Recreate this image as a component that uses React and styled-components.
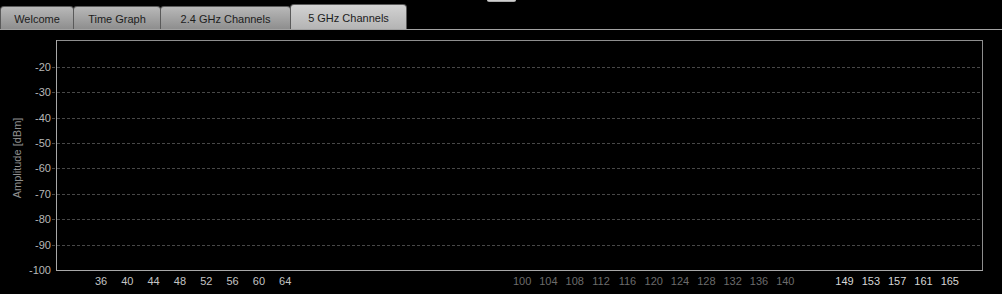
import React from "react";
import styled, { createGlobalStyle } from "styled-components";

const GlobalStyle = createGlobalStyle`
  html, body {
    margin: 0;
    padding: 0;
    background: #000;
  }
  body {
    font-family: "Liberation Sans", Arial, sans-serif;
    overflow: hidden;
  }
`;

const Page = styled.div`
  position: relative;
  width: 1002px;
  height: 294px;
  background: #000;
`;

const Grip = styled.div`
  position: absolute;
  top: 0;
  left: 487px;
  width: 29px;
  height: 2px;
  background: linear-gradient(#e0e0e0, #9a9a9a);
  border-radius: 0 0 2px 2px;
`;

const TabStrip = styled.div`
  display: flex;
  align-items: flex-end;
  height: 29px;
  border-bottom: 1px solid #a2a2a2;
`;

const Tab = styled.div`
  box-sizing: border-box;
  width: ${(p) => p.w}px;
  height: ${(p) => (p.active ? 25 : 23)}px;
  margin-left: ${(p) => (p.first ? 0 : -1)}px;
  display: flex;
  align-items: center;
  justify-content: center;
  padding-top: ${(p) => (p.active ? 2 : 1)}px;
  font-size: 11px;
  color: #1c1c1c;
  border: 1px solid #5a5a5a;
  border-bottom: none;
  border-radius: 4px 4px 0 0;
  background: ${(p) =>
    p.active
      ? "linear-gradient(#d2d2d2, #b4b4b4)"
      : "linear-gradient(#b8b8b8, #8e8e8e)"};
`;

const Chart = styled.svg`
  display: block;
  font-family: "Liberation Sans", Arial, sans-serif;
`;

const tabs = [
  { label: "Welcome", w: 74 },
  { label: "Time Graph", w: 88 },
  { label: "2.4 GHz Channels", w: 131 },
  { label: "5 GHz Channels", w: 117, active: true },
];

// plot frame in svg coords (svg starts at page y=30)
const L = 56;
const T = 10;
const R = 982;
const B = 240;
const STEP = 25.4;

const levels = [-20, -30, -40, -50, -60, -70, -80, -90, -100];

const groups = [
  { chans: [36, 40, 44, 48, 52, 56, 60, 64], color: "#c4c4c4" },
  { chans: [100, 104, 108, 112, 116, 120, 124, 128, 132, 136, 140], color: "#6c6c6c" },
  { chans: [149, 153, 157, 161, 165], color: "#d6d6d6" },
];

const chX = (ch) => 101 + (ch - 36) * 6.58;

export default function App() {
  return (
    <Page>
      <GlobalStyle />
      <Grip />
      <TabStrip>
        {tabs.map((t, i) => (
          <Tab key={t.label} w={t.w} active={t.active} first={i === 0}>
            {t.label}
          </Tab>
        ))}
      </TabStrip>
      <Chart width="1002" height="264" viewBox="0 0 1002 264">
        <rect x={L + 0.5} y={T + 0.5} width={R - L} height={B - T} fill="none" stroke="#8e8e8e" />
        {levels.map((v) => {
          const y = B - ((v + 100) / 10) * STEP;
          const yy = Math.round(y) + 0.5;
          return (
            <g key={v}>
              {v !== -100 && (
                <line x1={52} x2={R} y1={yy} y2={yy} stroke="#484848" strokeDasharray="3 2" />
              )}
              <text x={51} y={y + 4} textAnchor="end" fontSize="11" fill="#b8b8b8">
                {v}
              </text>
            </g>
          );
        })}
        <line x1={L + 0.5} x2={L + 0.5} y1={T} y2={B + 1} stroke="#a8a8a8" />
        <line x1={L} x2={R + 1} y1={B + 0.5} y2={B + 0.5} stroke="#a8a8a8" />
        <text
          x={0}
          y={0}
          transform="translate(21 128) rotate(-90)"
          textAnchor="middle"
          fontSize="11"
          fill="#909090"
        >
          Amplitude [dBm]
        </text>
        {groups.map((g) =>
          g.chans.map((c) => (
            <text key={c} x={chX(c)} y={255} textAnchor="middle" fontSize="11" fill={g.color}>
              {c}
            </text>
          ))
        )}
      </Chart>
    </Page>
  );
}
